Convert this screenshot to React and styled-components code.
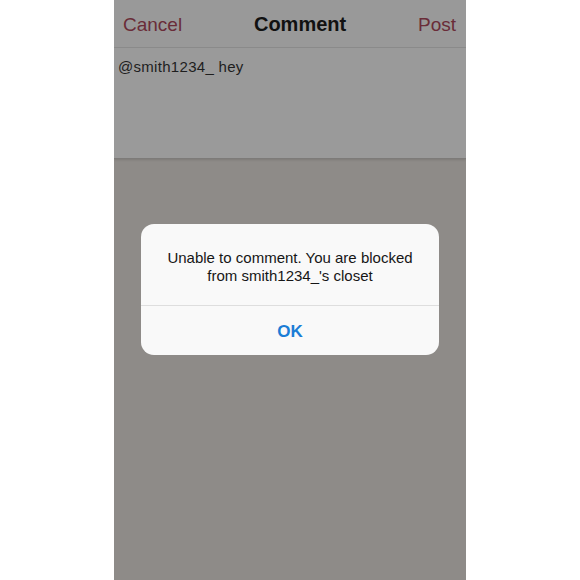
import React from "react";
import styled, { createGlobalStyle } from "styled-components";

const Global = createGlobalStyle`
  html, body { margin: 0; padding: 0; background: #ffffff; }
  body { font-family: "Liberation Sans", Arial, sans-serif; }
`;

const Page = styled.div`
  width: 580px;
  height: 580px;
  display: flex;
  justify-content: center;
  background: #ffffff;
`;

const Phone = styled.div`
  position: relative;
  width: 352px;
  height: 580px;
  display: flex;
  flex-direction: column;
  background: #8e8b88;
  overflow: hidden;
`;

const NavBar = styled.div`
  height: 48px;
  box-sizing: border-box;
  display: flex;
  align-items: center;
  justify-content: space-between;
  padding: 2px 10px 0 9px;
  background: #999999;
  border-bottom: 1px solid #8c8c8c;
`;

const NavButton = styled.span`
  font-size: 19px;
  color: #6a2c38;
`;

const NavTitle = styled.span`
  font-size: 20px;
  font-weight: 700;
  color: #111111;
`;

const Editor = styled.div`
  height: 111px;
  box-sizing: border-box;
  padding: 10px 4px;
  background: #9a9a9a;
  border-bottom: 1px solid #7d7b79;
  box-shadow: 0 1px 2px rgba(0, 0, 0, 0.12);
  font-size: 15px;
  letter-spacing: 0.3px;
  color: #1e1e1e;
`;

const Overlay = styled.div`
  position: absolute;
  inset: 0;
  display: flex;
  align-items: flex-start;
  justify-content: center;
  padding-top: 224px;
`;

const Alert = styled.div`
  width: 298px;
  background: #f9f9f9;
  border-radius: 13px;
  overflow: hidden;
  display: flex;
  flex-direction: column;
`;

const Message = styled.div`
  height: 82px;
  box-sizing: border-box;
  padding: 25px 16px 0;
  text-align: center;
  font-size: 15px;
  line-height: 18px;
  color: #161616;
  border-bottom: 1px solid #dedede;
`;

const AlertButton = styled.div`
  height: 49px;
  box-sizing: border-box;
  padding-top: 3px;
  display: flex;
  align-items: center;
  justify-content: center;
  font-size: 17px;
  font-weight: 700;
  color: #1b7dd6;
`;

export default function App() {
  return (
    <Page>
      <Global />
      <Phone>
        <NavBar>
          <NavButton>Cancel</NavButton>
          <NavTitle>Comment</NavTitle>
          <NavButton>Post</NavButton>
        </NavBar>
        <Editor>@smith1234_ hey</Editor>
        <Overlay>
          <Alert>
            <Message>
              Unable to comment. You are blocked
              <br />
              from smith1234_'s closet
            </Message>
            <AlertButton>OK</AlertButton>
          </Alert>
        </Overlay>
      </Phone>
    </Page>
  );
}
